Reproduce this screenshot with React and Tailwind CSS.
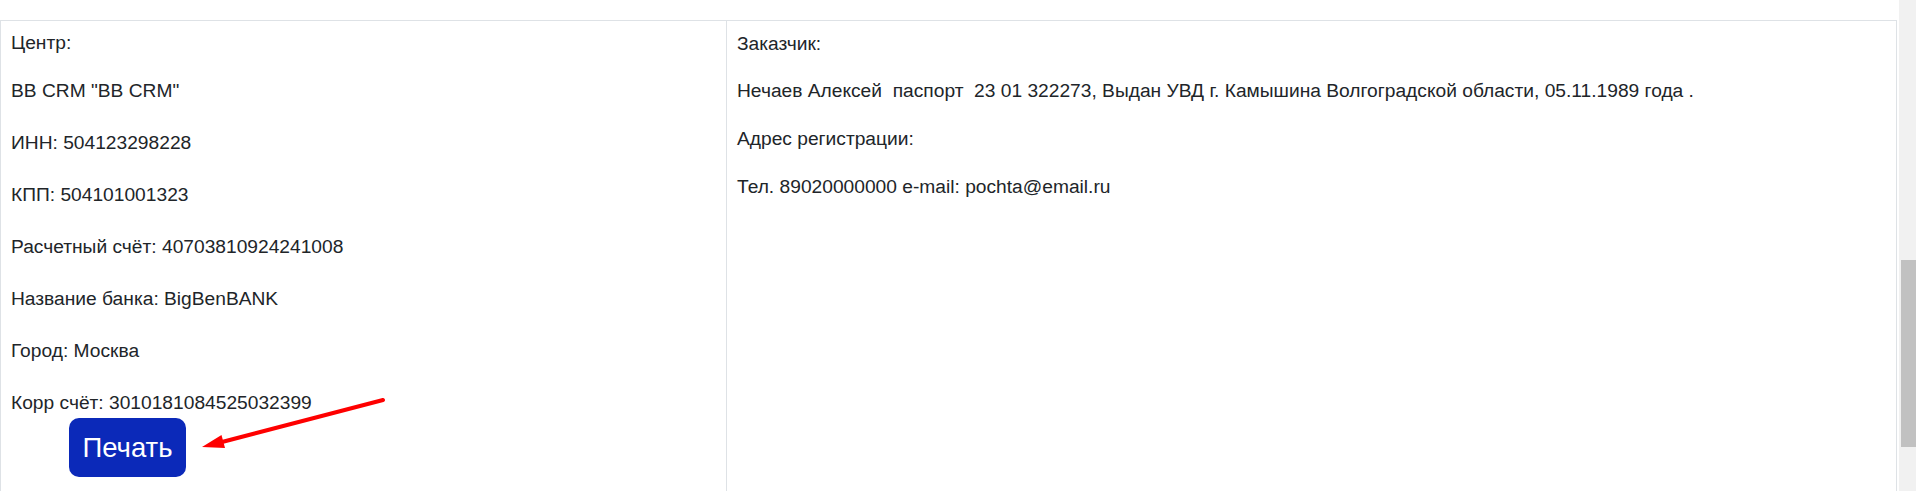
import React from "react";

const centerRows = [
  'BB CRM "BB CRM"',
  "ИНН: 504123298228",
  "КПП: 504101001323",
  "Расчетный счёт: 40703810924241008",
  "Название банка: BigBenBANK",
  "Город: Москва",
];

const clientRows = [
  "Нечаев Алексей\u00a0 паспорт\u00a0 23 01 322273, Выдан УВД г. Камышина Волгоградской области, 05.11.1989 года .",
  "Адрес регистрации:",
  "Тел. 89020000000 e-mail: pochta@email.ru",
];

function Arrow() {
  return (
    <svg
      className="absolute left-0 top-0 pointer-events-none"
      width="400"
      height="491"
      viewBox="0 0 400 491"
    >
      <line
        x1="383"
        y1="400"
        x2="222"
        y2="442"
        stroke="#fe0000"
        strokeWidth="4"
        strokeLinecap="round"
      />
      <polygon points="202,447 225,448 221.5,435" fill="#fe0000" />
    </svg>
  );
}

function App() {
  return (
    <div
      className="relative flex h-[491px] w-full overflow-hidden bg-white text-[#212529]"
      style={{ fontFamily: '"Liberation Sans", Arial, sans-serif' }}
    >
      <div className="w-[1899px] pt-5">
        <div className="flex h-[520px] w-[1897px] border-x border-t border-[#dee2e6]">
          <div className="w-[726px] border-r border-[#dee2e6] pl-[10px] pt-[7px] text-[19.2px] leading-[29px]">
            <p className="mb-[19px]">Центр:</p>
            {centerRows.map((r) => (
              <p key={r} className="mb-[23px]">
                {r}
              </p>
            ))}
            <p>Корр счёт: 3010181084525032399</p>
            <button className="ml-[58px] mt-px flex h-[59px] w-[117px] items-center justify-center rounded-[10px] bg-[#0b29b9] text-[27.5px] text-white">
              Печать
            </button>
          </div>

          <div className="flex-1 pl-[10px] pt-[8px] text-[19.2px] leading-[29px]">
            <p className="mb-[18px]">Заказчик:</p>
            {clientRows.map((r) => (
              <p key={r} className="mb-[19px]">
                {r}
              </p>
            ))}
          </div>
        </div>
      </div>

      <div className="flex-1 bg-[#f1f1f1] pt-[260px]">
        <div className="ml-[2px] h-[187px] bg-[#c1c1c1]"></div>
      </div>

      <Arrow />
    </div>
  );
}

export default App;
